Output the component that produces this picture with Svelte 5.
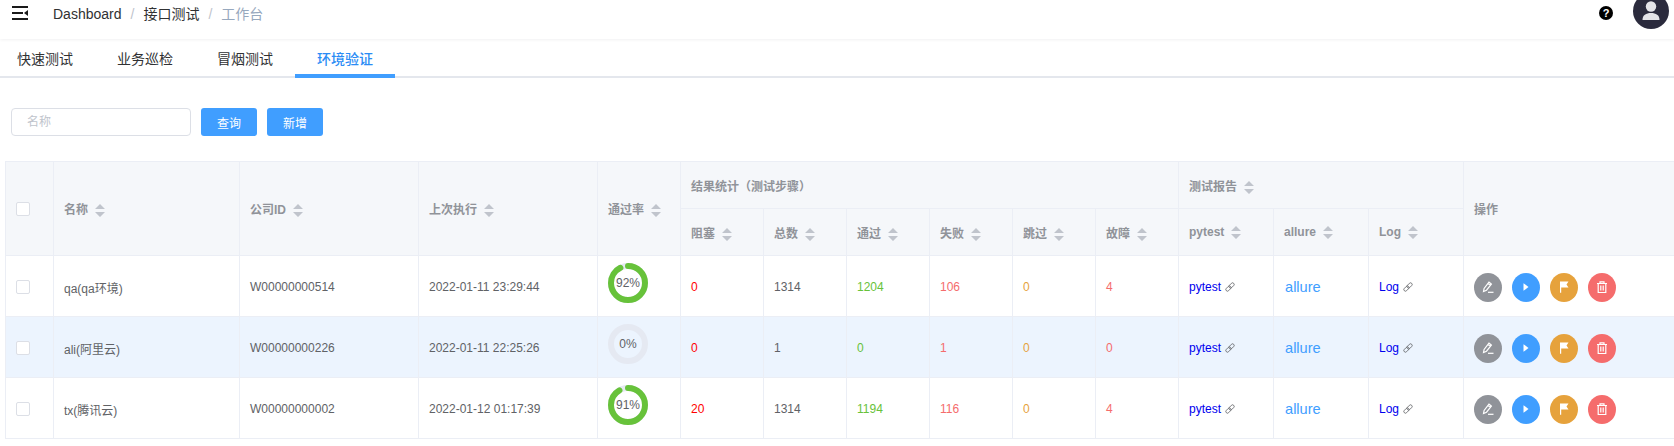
<script>
  const colWidths = [48, 186, 179, 179, 83, 83, 83, 83, 83, 83, 83, 95, 95, 95, 211]

  const rows = [
    { name: 'qa(qa环境)', id: 'W00000000514', last: '2022-01-11 23:29:44', rate: 92, block: 0, total: 1314, pass: 1204, fail: 106, skip: 0, err: 4 },
    { name: 'ali(阿里云)', id: 'W00000000226', last: '2022-01-11 22:25:26', rate: 0, block: 0, total: 1, pass: 0, fail: 1, skip: 0, err: 0 },
    { name: 'tx(腾讯云)', id: 'W00000000002', last: '2022-01-12 01:17:39', rate: 91, block: 20, total: 1314, pass: 1194, fail: 116, skip: 0, err: 4 }
  ]

  const circ = 2 * Math.PI * 17
</script>

{#snippet sort()}
  <svg class="sort" width="10" height="13" viewBox="0 0 10 13"><path d="M5 0l5 5H0zM5 13L0 8h10z" fill="#c0c4cc" /></svg>
{/snippet}

{#snippet check()}
  <span class="check"></span>
{/snippet}

{#snippet linkIcon()}
  <svg class="link-ic" width="10" height="10" viewBox="0 0 10 10" fill="none" stroke="#606266" stroke-width=".8">
    <g transform="rotate(-45 5 5)">
      <rect x="-.2" y="3.4" width="6" height="3.2" rx="1.6" />
      <rect x="4.2" y="3.4" width="6" height="3.2" rx="1.6" />
    </g>
  </svg>
{/snippet}

<header class="topbar">
  <div class="left">
    <svg class="burger" width="16" height="14" viewBox="0 0 16 14">
      <path d="M0 0h16v2H0zM0 6h11v2H0zM0 12h16v2H0z" fill="#1a1a1a" />
      <path d="M16 4v6l-4-3z" fill="#1a1a1a" />
    </svg>
    <nav class="crumbs">
      <span>Dashboard</span><i>/</i><span>接口测试</span><i>/</i><span class="cur">工作台</span>
    </nav>
  </div>
  <div class="right">
    <span class="help">?</span>
    <span class="avatar">
      <svg width="36" height="36" viewBox="0 0 36 36">
        <circle cx="18" cy="18" r="18" fill="#2b2b3d" />
        <circle cx="18" cy="13.5" r="5.2" fill="#e4e4e8" />
        <path d="M9.5 27c0-5 3.5-7 8.5-7s8.5 2 8.5 7z" fill="#e4e4e8" />
      </svg>
    </span>
  </div>
</header>

<div class="tabs">
  <span class="tab">快速测试</span>
  <span class="tab">业务巡检</span>
  <span class="tab">冒烟测试</span>
  <span class="tab active">环境验证</span>
</div>

<div class="filter">
  <input class="search" placeholder="名称" />
  <button>查询</button>
  <button>新增</button>
</div>

<table>
  <colgroup>
    {#each colWidths as w}<col style="width:{w}px" />{/each}
  </colgroup>
  <thead>
    <tr>
      <th rowspan="2">{@render check()}</th>
      <th rowspan="2">名称{@render sort()}</th>
      <th rowspan="2">公司ID{@render sort()}</th>
      <th rowspan="2">上次执行{@render sort()}</th>
      <th rowspan="2">通过率{@render sort()}</th>
      <th colspan="6">结果统计（测试步骤）</th>
      <th colspan="3">测试报告{@render sort()}</th>
      <th rowspan="2">操作</th>
    </tr>
    <tr>
      <th>阻塞{@render sort()}</th>
      <th>总数{@render sort()}</th>
      <th>通过{@render sort()}</th>
      <th>失败{@render sort()}</th>
      <th>跳过{@render sort()}</th>
      <th>故障{@render sort()}</th>
      <th>pytest{@render sort()}</th>
      <th>allure{@render sort()}</th>
      <th>Log{@render sort()}</th>
    </tr>
  </thead>
  <tbody>
    {#each rows as r, i}
      <tr class:stripe={i === 1}>
        <td>{@render check()}</td>
        <td>{r.name}</td>
        <td>{r.id}</td>
        <td>{r.last}</td>
        <td class="rate">
          <div class="ring">
            <svg width="40" height="40" viewBox="0 0 40 40">
              <circle cx="20" cy="20" r="17" fill="none" stroke="#e5e9f2" stroke-width="6" />
              {#if r.rate > 0}
                <circle cx="20" cy="20" r="17" fill="none" stroke="#67c23a" stroke-width="6" stroke-linecap="round"
                  stroke-dasharray="{circ * r.rate / 100} {circ}" transform="rotate(-90 20 20)" />
              {/if}
            </svg>
            <span>{r.rate}%</span>
          </div>
        </td>
        <td class="red">{r.block}</td>
        <td>{r.total}</td>
        <td class="green">{r.pass}</td>
        <td class="danger">{r.fail}</td>
        <td class="orange">{r.skip}</td>
        <td class="danger">{r.err}</td>
        <td><a href="#r">pytest</a>{@render linkIcon()}</td>
        <td class="allure">allure</td>
        <td><a href="#r">Log</a>{@render linkIcon()}</td>
        <td>
          <div class="ops">
            <span class="op grey">
              <svg width="14" height="14" viewBox="0 0 14 14" fill="none" stroke="#fff" stroke-width="1.2">
                <path d="M2.5 11.5l.6-3L8 2.2l2.4 1.8-4.9 6.2zM7 3.5l2.4 1.9" />
                <path d="M7 12.3h5.5" />
              </svg>
            </span>
            <span class="op blue">
              <svg width="14" height="14" viewBox="0 0 14 14"><path d="M4.5 3.2l5 3.8-5 3.8z" fill="#fff" /></svg>
            </span>
            <span class="op amber">
              <svg width="14" height="14" viewBox="0 0 14 14"><path d="M3 1.5h8.5L9.5 4.6l2 3H4.2v5.2H3z" fill="#fff" /></svg>
            </span>
            <span class="op pink">
              <svg width="14" height="14" viewBox="0 0 14 14" fill="none" stroke="#fff" stroke-width="1.2">
                <path d="M2 3.5h10M5 3.5V1.8h4v1.7M3.2 3.5v9h7.6v-9M5.8 5.5v5M8.2 5.5v5" />
              </svg>
            </span>
          </div>
        </td>
      </tr>
    {/each}
  </tbody>
</table>

<style>
  :global(body) {
    margin: 0;
    background: #fff;
    font-family: "Liberation Sans", "Noto Sans CJK SC", sans-serif;
    color: #606266;
  }
  .topbar {
    height: 39px;
    overflow: hidden;
    display: flex;
    justify-content: space-between;
    box-shadow: 0 1px 3px rgba(0, 21, 41, .06);
  }
  .left {
    display: flex;
    align-items: flex-start;
  }
  .burger {
    margin: 6px 0 0 12px;
  }
  .crumbs {
    margin-left: 25px;
    font-size: 14px;
    line-height: 28px;
    color: #303133;
  }
  .crumbs i {
    font-style: normal;
    margin: 0 9px;
    color: #c0c4cc;
  }
  .crumbs .cur {
    color: #97a8be;
  }
  .right {
    display: flex;
    align-items: flex-start;
  }
  .help {
    width: 14px;
    height: 14px;
    margin: 6px 20px 0 0;
    border-radius: 50%;
    background: #000;
    color: #fff;
    font-size: 11px;
    font-weight: 700;
    line-height: 14px;
    text-align: center;
  }
  .avatar {
    height: 36px;
    margin: -7px 5px 0 0;
  }
  .tabs {
    height: 39px;
    display: flex;
    box-sizing: border-box;
    border-bottom: 2px solid #e4e7ed;
  }
  .tab {
    width: 100px;
    height: 39px;
    box-sizing: border-box;
    padding-left: 22px;
    font-size: 14px;
    line-height: 40px;
    color: #303133;
  }
  .tab:first-child {
    width: 95px;
    padding-left: 17px;
  }
  .tab.active {
    color: #2a8cf5;
    font-weight: 500;
    border-bottom: 4px solid #409eff;
  }
  .filter {
    display: flex;
    gap: 10px;
    padding: 30px 0 25px 11px;
  }
  .search {
    width: 180px;
    height: 28px;
    box-sizing: border-box;
    padding: 0 15px;
    border: 1px solid #dcdfe6;
    border-radius: 4px;
    font: 12px "Liberation Sans", "Noto Sans CJK SC", sans-serif;
    outline: none;
  }
  .search::placeholder {
    color: #c0c4cc;
  }
  button {
    width: 56px;
    height: 28px;
    padding: 0;
    border: 0;
    border-radius: 3px;
    background: #409eff;
    color: #fff;
    font: 12px "Liberation Sans", "Noto Sans CJK SC", sans-serif;
  }
  table {
    width: 1669px;
    margin-left: 5px;
    table-layout: fixed;
    border-collapse: collapse;
    font-size: 12px;
  }
  th, td {
    border: 1px solid #ebeef5;
    padding: 0 10px;
    text-align: left;
    overflow: hidden;
    white-space: nowrap;
  }
  th {
    height: 46px;
    background: #f5f7fa;
    color: #909399;
    font-weight: 700;
  }
  td {
    height: 58px;
    padding-top: 2px;
  }
  .stripe td {
    background: #ecf4fe;
  }
  .sort {
    margin-left: 7px;
    vertical-align: -3px;
  }
  .check {
    display: block;
    width: 12px;
    height: 12px;
    border: 1px solid #dcdfe6;
    border-radius: 2px;
    background: #fff;
  }
  td.rate {
    height: 53px;
    vertical-align: top;
    padding-top: 7px;
  }
  .ring {
    position: relative;
    width: 40px;
    height: 40px;
  }
  .ring svg {
    display: block;
  }
  .ring span {
    position: absolute;
    inset: 0;
    line-height: 40px;
    text-align: center;
  }
  .red { color: #f00; }
  .green { color: #67c23a; }
  .danger { color: #f56c6c; }
  .orange { color: #e6a23c; }
  a {
    color: #00e;
    text-decoration: none;
  }
  .link-ic {
    margin-left: 4px;
    vertical-align: -1px;
  }
  td.allure {
    padding-left: 11px;
    font-size: 14.6px;
    color: #409eff;
  }
  .ops {
    display: flex;
    gap: 10px;
  }
  .op {
    width: 28px;
    height: 29px;
    border-radius: 50%;
    display: flex;
    align-items: center;
    justify-content: center;
  }
  .grey { background: #909399; }
  .blue { background: #409eff; }
  .amber { background: #e6a23c; }
  .pink { background: #f56c6c; }
</style>
